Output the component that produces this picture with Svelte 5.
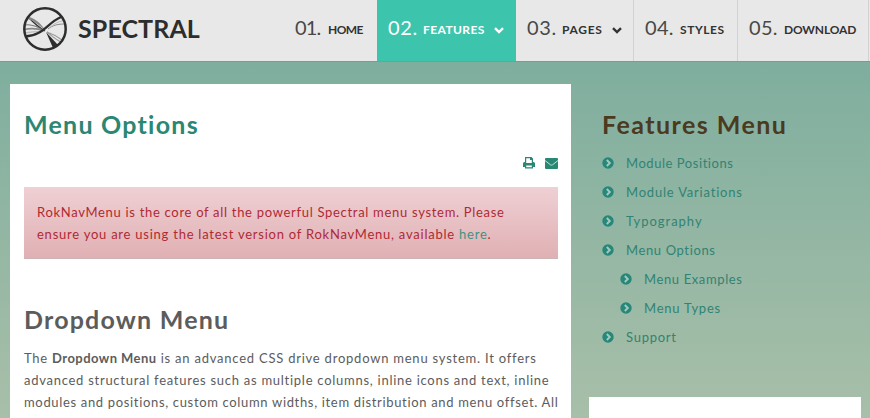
<script>
  const nav = [
    { num: '01.', label: 'HOME', width: 95, ns: -0.9, ls: -0.6 },
    { num: '02.', label: 'FEATURES', width: 139, ns: 0.6, ls: 0.4, active: true, arrow: true },
    { num: '03.', label: 'PAGES', width: 118, ns: 0.6, ls: 0.7, arrow: true },
    { num: '04.', label: 'STYLES', width: 104, ns: 0.3, ls: 0.55 },
    { num: '05.', label: 'DOWNLOAD', width: 131, ns: 0.3, ls: -0.15 }
  ];
  const links = [
    { text: 'Module Positions', ls: 0.55 },
    { text: 'Module Variations', ls: 0.8 },
    { text: 'Typography', ls: 0.98 },
    { text: 'Menu Options', ls: 0.62 },
    { text: 'Menu Examples', ls: 0.62, sub: true },
    { text: 'Menu Types', ls: 0.78, sub: true },
    { text: 'Support', ls: 0.75 }
  ];
</script>

<div class="page">
  <header>
    <div class="logo">
      <svg width="46" height="46" viewBox="0 0 46 46" fill="none" stroke="#2d2d2d">
        <path d="M23 25C16 21 10 15 7 12" stroke-width="1.2" />
        <path d="M22 25C15 20 9 18 3 19" stroke="#777" stroke-width="1.2" />
        <path d="M22 25C15 22 9 22 2 23.500" stroke="#888" stroke-width="1.6" />
        <path d="M22 25.500C15 25 8 26 2 27" stroke="#bbb" stroke-width="1.3" />
        <path d="M7 11C12 12 19 17 23 24C17 19 12 15 6 13Z" fill="#888" stroke="none" />
        <path d="M3 30.500C21 30 25 17 39 11" stroke-width="2.300" />
        <path d="M26 23C31 19 36 18 43 18" stroke="#888" stroke-width="1" />
        <path d="M27 22C32 18 37 15 41 15" stroke="#bbb" stroke-width="1" />
        <path d="M24 26L36 39L31 42Z" fill="#2d2d2d" stroke="none" />
        <path d="M25 26C29 29 34 34 39 36M25 26C31 28 36 31 40 34" stroke="#999" stroke-width="1.100" />
        <circle cx="23" cy="23" r="20.700" stroke-width="2.500" />
      </svg>
      <span class="brand">SPECTRAL</span>
    </div>
    <nav>
      {#each nav as item}
        <a class:active={item.active} style="width:{item.width}px">
          <span class="num" style="letter-spacing:{item.ns}px">{item.num}</span>
          <span class="label" style="letter-spacing:{item.ls}px">{item.label}</span>
          {#if item.arrow}
            <svg class="arrow" width="10" height="7" viewBox="0 0 10 7" fill="none" stroke="currentColor" stroke-width="2.400"><path d="M1 1.200L5 5L9 1.200" /></svg>
          {/if}
        </a>
      {/each}
    </nav>
  </header>

  <div class="body">
    <main>
      <h1>Menu Options</h1>
      <div class="tools">
        <svg width="12" height="12" viewBox="0 0 12 12"><path fill="#2a8774" fill-rule="evenodd" d="M2 0h6.500L10 1.500V5h.5A1.500 1.500 0 0 1 12 6.500V10H10v1.500H2V10H0V6.500A1.500 1.500 0 0 1 1.500 5H2zM3.200 1.200V6h5.600V3H7V1.200zM3.200 8.500v1.800h5.600V8.500z" /></svg>
        <svg width="13" height="11" viewBox="0 0 13 11"><rect width="13" height="11" rx="1" fill="#2a8774" /><path d="M0 2.500L5.500 6.800Q6.500 7.400 7.500 6.800L13 2.500" fill="none" stroke="#c5e0d8" stroke-width="1" /></svg>
      </div>
      <div class="alert">
        <div style="letter-spacing:0.695px">RokNavMenu is the core of all the powerful Spectral menu system. Please</div>
        <div style="letter-spacing:0.76px">ensure you are using the latest version of RokNavMenu, available <a>here</a>.</div>
      </div>
      <h2>Dropdown Menu</h2>
      <div class="text">
        <div style="letter-spacing:0.77px">The <b>Dropdown Menu</b> is an advanced CSS drive dropdown menu system. It offers</div>
        <div style="letter-spacing:0.732px">advanced structural features such as multiple columns, inline icons and text, inline</div>
        <div style="letter-spacing:0.665px">modules and positions, custom column widths, item distribution and menu offset. All</div>
      </div>
    </main>
    <aside>
      <h3>Features Menu</h3>
      <ul>
        {#each links as l}
          <li class:sub={l.sub}>
            <svg width="12" height="12" viewBox="0 0 12 12"><circle cx="6" cy="6" r="5.700" fill="#27877a" /><path d="M4.800 3L7.800 6L4.800 9" fill="none" stroke="#a3cbbb" stroke-width="1.900" /></svg>
            <span style="letter-spacing:{l.ls}px">{l.text}</span>
          </li>
        {/each}
      </ul>
      <div class="card"></div>
    </aside>
  </div>
</div>

<style>
  :global(body) { margin: 0; overflow: hidden; }
  .page { width: 870px; height: 418px; overflow: hidden; display: flex; flex-direction: column; font: 13px/22px Lato, sans-serif; font-variant-ligatures: none; color: #5c5c5c; background: linear-gradient(#7fae9e 62px, #a8bfa9 418px); }
  header { display: flex; justify-content: space-between; flex: none; height: 61px; background: #e8e8e8; border-bottom: 1px solid #75a091; }
  .logo { display: flex; padding: 6px 0 0 22px; }
  .logo svg { flex: none; }
  .brand { margin: 7px 0 0 10px; font-size: 25px; line-height: 30px; font-weight: 700; letter-spacing: 0.1px; color: #2d2d2d; }
  nav { display: flex; padding-right: 1px; }
  nav a { box-sizing: border-box; display: flex; align-items: baseline; height: 61px; padding: 15px 0 0 11px; border-right: 1px solid #d2d2d2; color: #333; white-space: nowrap; }
  nav a:first-child { border-right: 0; }
  nav a.active { background: #3dc4ad; border-color: #3dc4ad; color: #fff; }
  .num { width: 35px; flex: none; font-size: 20px; line-height: 24px; color: #484848; }
  a:first-child .num { width: 33px; margin-left: 2px; }
  .active .num { color: #fff; }
  .label { font-size: 12px; font-weight: 700; position: relative; top: -1px; }
  .arrow { margin-left: 9px; position: relative; top: -1px; }
  .body { display: flex; flex: 1; align-items: flex-start; padding: 22px 0 0 10px; }
  main { box-sizing: border-box; width: 561.400px; height: 334px; flex: none; padding: 0 13.400px 0 14px; background: #fff; white-space: nowrap; }
  h1, h2, h3 { margin: 0; font-size: 25px; line-height: 30px; font-weight: 700; }
  h1 { padding-top: 25px; color: #2b8772; letter-spacing: 1.240px; }
  .tools { display: flex; justify-content: flex-end; align-items: center; gap: 10px; height: 12px; margin: 18px 0 18px; }
  .alert { box-sizing: border-box; height: 72px; padding: 14px 13px 0; color: #b02a33; background: linear-gradient(#efd0d4, #e0b0b3); border-bottom: 1px solid #c9b4b7; }
  .alert a { color: #43917f; }
  h2 { margin: 45px 0 0; letter-spacing: 1.200px; }
  .text { margin-top: 13px; }
  .text b { letter-spacing: 0.450px; }
  aside { width: 272px; margin-left: 17.600px; }
  h3 { padding: 25px 0 0 13px; color: #4b3a20; letter-spacing: 1.450px; }
  ul { list-style: none; margin: 9px 0 46px; padding: 0 0 0 13px; }
  li { display: flex; align-items: center; height: 29px; color: #318373; }
  li svg { margin-right: 12px; }
  li.sub { padding-left: 18px; }
  .card { height: 40px; background: #fff; }
</style>
